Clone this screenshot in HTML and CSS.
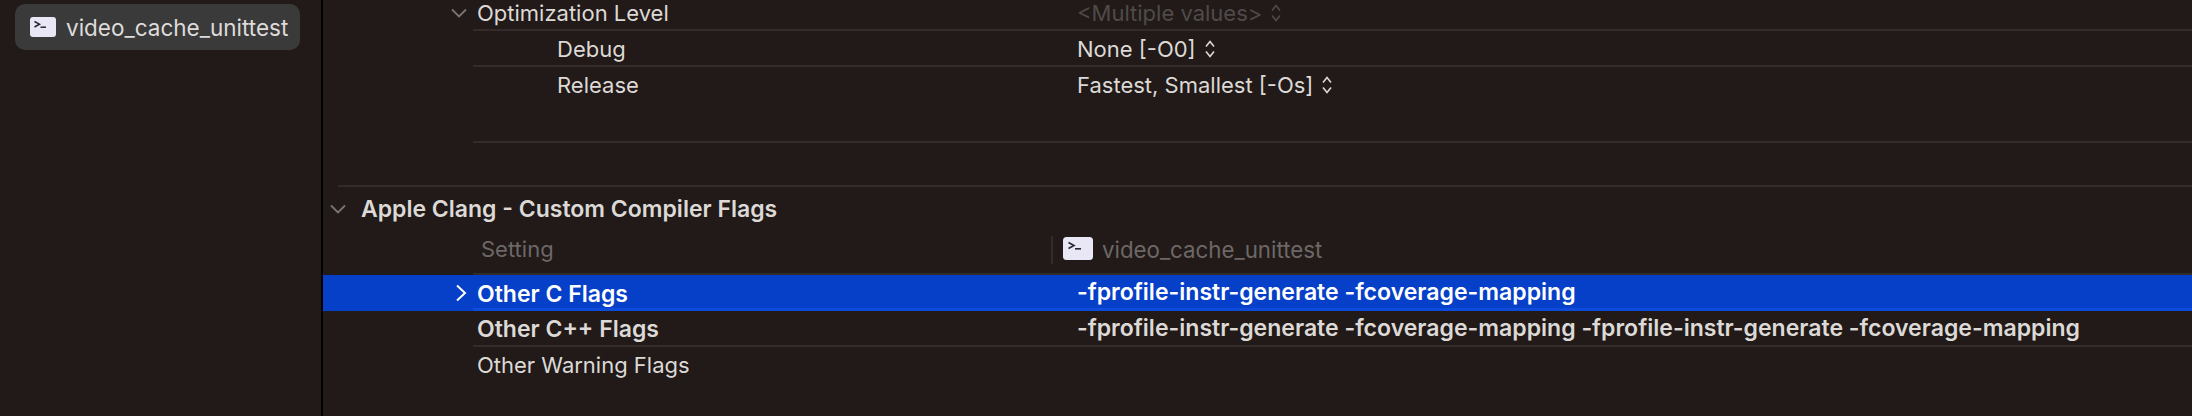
FILE: index.html
```html
<!DOCTYPE html>
<html lang="en">
<head>
<meta charset="utf-8">
<title>Build Settings</title>
<link rel="stylesheet" href="styles.css">
</head>
<body>
<div class="app">
  <aside class="sidebar">
    <div class="target">
      <svg class="term" viewBox="0 0 26 20"><rect width="26" height="20" rx="3" fill="#e9e7f5"/><path d="M4.5 4.5 L9.5 7.2 L4.5 10" fill="none" stroke="#2a2630" stroke-width="1.5"/><path d="M10.5 10.2 H16" stroke="#2a2630" stroke-width="1.5"/></svg>
      <span class="target-name">video_cache_unittest</span>
    </div>
  </aside>
  <main class="main">
    <div class="row row-first">
      <svg class="disc" viewBox="0 0 16 10"><path d="M1 1.5 L8 8.5 L15 1.5" fill="none" stroke="#7a7473" stroke-width="1.8"/></svg>
      <div class="inner"><span class="name">Optimization Level</span><span class="value dim">&lt;Multiple values&gt;<svg class="updown" viewBox="0 0 10 18"><path d="M1 6.5 L5 1.5 L9 6.5 M1 11.5 L5 16.5 L9 11.5" fill="none" stroke="currentColor" stroke-width="1.6"/></svg></span></div>
    </div>
    <div class="row">
      <span class="disc"></span>
      <div class="inner"><span class="name sub">Debug</span><span class="value">None [-O0]<svg class="updown" viewBox="0 0 10 18"><path d="M1 6.5 L5 1.5 L9 6.5 M1 11.5 L5 16.5 L9 11.5" fill="none" stroke="currentColor" stroke-width="1.6"/></svg></span></div>
    </div>
    <div class="row row-plain">
      <span class="disc"></span>
      <div class="inner"><span class="name sub">Release</span><span class="value">Fastest, Smallest [-Os]<svg class="updown" viewBox="0 0 10 18"><path d="M1 6.5 L5 1.5 L9 6.5 M1 11.5 L5 16.5 L9 11.5" fill="none" stroke="currentColor" stroke-width="1.6"/></svg></span></div>
    </div>
    <div class="row row-spacer">
      <span class="disc"></span>
      <div class="inner"></div>
    </div>
    <div class="section-rule"></div>
    <div class="section-head">
      <svg class="section-disc" viewBox="0 0 16 10"><path d="M1 1.5 L8 8.5 L15 1.5" fill="none" stroke="#7a7473" stroke-width="1.8"/></svg>
      <span class="section-title">Apple Clang - Custom Compiler Flags</span>
    </div>
    <div class="columns">
      <div class="columns-inner">
        <span class="col-setting">Setting</span>
        <div class="col-target">
          <svg class="term term-col" viewBox="0 0 30 23"><rect width="30" height="23" rx="3.5" fill="#e9e7f5"/><path d="M5.5 5.5 L11 8.5 L5.5 11.5" fill="none" stroke="#2a2630" stroke-width="1.6"/><path d="M12 11.8 H18" stroke="#2a2630" stroke-width="1.6"/></svg>
          <span class="col-target-name">video_cache_unittest</span>
        </div>
      </div>
    </div>
    <div class="row row-flag selected">
      <svg class="disc disc-right" viewBox="0 0 12 18"><path d="M2 1.5 L10 9 L2 16.5" fill="none" stroke="#ffffff" stroke-width="2"/></svg>
      <div class="inner"><span class="name bold">Other C Flags</span><span class="value bold flags">-fprofile-instr-generate -fcoverage-mapping</span></div>
    </div>
    <div class="row row-flag">
      <span class="disc"></span>
      <div class="inner"><span class="name bold">Other C++ Flags</span><span class="value bold flags">-fprofile-instr-generate -fcoverage-mapping -fprofile-instr-generate -fcoverage-mapping</span></div>
    </div>
    <div class="row row-flag row-plain">
      <span class="disc"></span>
      <div class="inner"><span class="name">Other Warning Flags</span></div>
    </div>
  </main>
</div>
</body>
</html>
```
FILE: styles.css
```css
* { box-sizing: border-box; }
html, body { margin: 0; height: 100%; }
body {
  background: #211a18;
  color: #dcd9d6;
  font-family: Inter, "Liberation Sans", sans-serif;
  font-size: 22px;
  overflow: hidden;
}
.app { display: flex; height: 416px; }
.sidebar {
  width: 321px;
  flex: none;
  padding: 4px 21px 0 15px;
}
.target {
  display: flex;
  align-items: center;
  gap: 10px;
  height: 46px;
  padding-left: 15px;
  background: #3a3a3a;
  border-radius: 10px;
}
.term { width: 26px; height: 20px; flex: none; }
.target-name { font-size: 22.5px; color: #dedcda; }
.main {
  flex: 1;
  min-width: 0;
  border-left: 2px solid #000;
}
.row {
  display: flex;
  height: 36px;
  padding-left: 128px;
}
.row-first { height: 31px; }
.row-spacer { height: 40px; }
.disc { width: 16px; flex: none; margin-right: 6px; align-self: center; }
.row-first .disc { height: 10px; align-self: flex-start; margin-top: 8px; }
.disc-right { width: 12px; height: 18px; margin-left: 4px; margin-right: 6px; }
.inner {
  flex: 1;
  display: grid;
  grid-template-columns: 600px 1fr;
  align-items: center;
  padding: 2px 0 0 4px;
  border-bottom: 2px solid #332b29;
}
.row-plain .inner { border-bottom: 0; padding-top: 0; }
.row-first .inner { padding: 0 0 4px 4px; }
.name.sub { padding-left: 80px; }
.value { display: flex; align-items: center; white-space: nowrap; }
.dim { color: #4f4a49; }
.updown { width: 10px; height: 18px; margin-left: 9px; }
.bold { font-weight: 600; font-size: 23px; }
.flags { font-size: 23.06px; margin-bottom: 3px; }
.section-rule {
  height: 2px;
  margin: 42px 0 0 15px;
  background: #332b29;
}
.section-head {
  display: flex;
  align-items: center;
  height: 48px;
  padding: 0 0 4px 7px;
}
.section-disc { width: 16px; height: 10px; flex: none; margin-right: 15px; }
.section-title { font-weight: 600; font-size: 23px; color: #dcd9d6; }
.columns { padding-left: 150px; }
.columns-inner {
  display: flex;
  height: 40px;
  border-bottom: 2px solid #332b29;
  color: #6d6867;
}
.col-setting { width: 578px; padding-left: 8px; line-height: 28px; }
.col-target {
  display: flex;
  align-items: center;
  height: 28px;
  gap: 9px;
  padding-left: 10px;
  margin-top: 1px;
  border-left: 2px solid #332b29;
}
.col-target-name { font-size: 22.3px; margin-top: -2px; }
.term-col { width: 30px; height: 23px; margin-top: -4px; }
.selected { background: #0640c8; color: #fff; }
.selected .inner { border-bottom: 3px solid #0d4bdb; padding-top: 3px; }
```
